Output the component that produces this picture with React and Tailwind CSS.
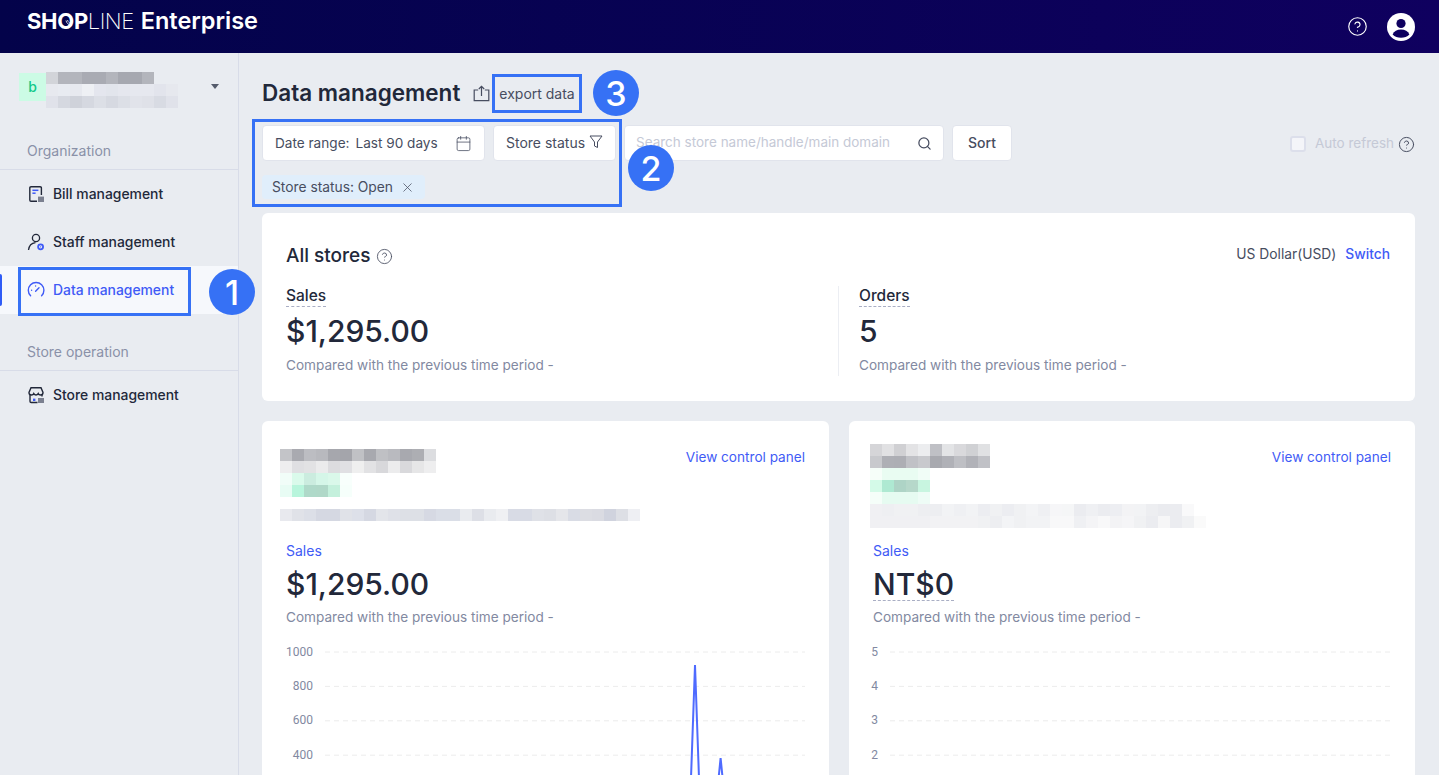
import React from 'react';
import { Calendar, CircleHelp, Search, X } from 'lucide-react';

const inter = 'font-["Inter","Noto_Sans",sans-serif]';

// blurred-out store names, one row of cells per line
const accountPixels = [
  ['#d2d4d9', '#b3b5bc', '#b3b5bc', '#a9abb3', '#a9abb3', '#b3b5bc', '#a6a8b0', '#a6a8b0', '#b3b5bc'],
  ['#e7e9ef', '#e8ebf1', '#e7e9ef', '#eef0f4', '#e4e6ee', '#e2e5ec', '#e5e7ee', '#e6e8ef', '#e6e8ef', '#e2e4ec', '#e6e8ee'],
  ['#e0e2ea', '#d5d8e0', '#cfd2da', '#d5d8e0', '#dcdfe6', '#d6d9e1', '#dcdfe6', '#e1e3ea', '#dfe1e8', '#d8dbe3', '#e0e2ea'],
];

const storeOnePixels = [
  ['#c3c4c8', '#a9aab0', '#bcbdc2', '#b8b9be', '#a6a7ad', '#a4a5ab', '#c0c1c5', '#a8a9af', '#bfc0c4', '#b9babf', '#a8a9af', '#adaeb3', '#dcdde0'],
  ['#eeeeef', '#dfdfe2', '#e2e2e4', '#ebebec', '#dcdcdf', '#e0e0e3', '#efefef', '#e2e2e4', '#d8d8db', '#ececed', '#d9d9dc', '#e6e6e7', '#eeeeef'],
  ['#f1fdf8', '#dafaeb', '#cbecdf', '#d5f6e8', '#daf8ea', '#f8fffc'],
  ['#e8fcf4', '#b8f5dc', '#afd9c9', '#b0d8c8', '#c4f0dc', '#f6fffb'],
  [],
  ['#e8e9ee', '#e0e2e8', '#dcdfe7', '#d5d8e2', '#d5d8e2', '#e0e2e8', '#dde0e9', '#d5d8e2', '#e3e5ea', '#dfe1e8', '#dde0e6', '#dde0e6', '#d6d9e3', '#dadee7', '#dadee7', '#e9ebef', '#dddfe6', '#e9ebef', '#eff0f3', '#d8dbe5', '#d8dbe5', '#dfe1e7', '#dddfe5', '#e5e6ea', '#d9dce5', '#dcdde3', '#dadbe2', '#d0d3de', '#dddfe5', '#eeeff3'],
];

const storeTwoPixels = [
  ['#d5d5d8', '#e1e1e3', '#d0d0d3', '#e3e3e5', '#ecedef', '#bfc0c5', '#e3e4e6', '#d9d9dc', '#d0d1d4', '#e0e1e3'],
  ['#c8c9cd', '#aeafb5', '#adaeb4', '#c0c1c6', '#c8c9cd', '#a8a9af', '#b0b1b7', '#bebfc4', '#b1b2b8', '#c0c1c6'],
  ['#f6fef9', '#e9fcf2', '#e9fcf2', '#e9fcf2', '#f1fdf7'],
  ['#d4fae8', '#aee9d2', '#aed4c6', '#b6d8ca', '#c8f5e0'],
  ['#f5fef9', '#e6fbf1', '#e6fbf1', '#e6fbf1', '#eefcf6'],
  ['#f0f0f3', '#eeeff2', '#f0f1f3', '#f0f1f3', '#edeef1', '#edeef1', '#f2f3f5', '#eff0f3', '#f2f3f5', '#ecedf1', '#f0f1f3', '#ecedf1', '#f0f1f3', '#f3f4f6', '#eff0f3', '#f6f6f8', '#f5f6f7', '#ebecf0', '#eff0f3', '#ebecf0', '#edeef2', '#f3f3f5', '#f2f3f5', '#edeef1', '#eaebef', '#ebecf0', '#f9f9fa'],
  ['#f0f0f3', '#f0f0f3', '#f0f0f3', '#f0f0f3', '#f0f0f3', '#f2f2f4', '#f2f2f4', '#f2f2f4', '#f2f2f4', '#f0f1f3', '#edeef1', '#f3f4f6', '#f0f1f3', '#f2f3f5', '#f2f3f5', '#f8f8f9', '#f8f8f9', '#eff0f3', '#f4f4f6', '#f8f8f9', '#f3f3f5', '#f5f5f7', '#f0f1f3', '#ebecf0', '#f6f6f7', '#ebecf0', '#f0f1f3', '#fafafa'],
];

function Pixels({ rows }) {
  return (
    <div className="flex flex-col">
      {rows.map((row, i) => (
        <div key={i} className="flex h-3">
          {row.map((color, j) => (
            <div key={j} className="h-3 w-3" style={{ backgroundColor: color }} />
          ))}
        </div>
      ))}
    </div>
  );
}

function BillIcon() {
  return (
    <svg width="18" height="18" viewBox="0 0 18 18" fill="none" stroke="#22283a" strokeWidth="1.4">
      <path d="M10 16.3H4A1.2 1.2 0 0 1 2.8 15.1V2.9A1.2 1.2 0 0 1 4 1.7H13.2A1.2 1.2 0 0 1 14.4 2.9V10" />
      <path d="M5.4 5.3H11.4" stroke="#3f5bf6" strokeWidth="1.5" />
      <path d="M5.4 8.2H8.6" stroke="#3f5bf6" strokeWidth="1.5" />
      <rect x="11" y="11.6" width="6" height="5.4" fill="#7b8090" stroke="none" />
    </svg>
  );
}

function StaffIcon() {
  return (
    <svg width="18" height="18" viewBox="0 0 18 18" fill="none" stroke="#22283a" strokeWidth="1.3">
      <circle cx="9" cy="5" r="3.6" />
      <path d="M1.5 17C2 12.8 4.5 10 8.5 9.6" />
      <circle cx="13.6" cy="13.8" r="2.5" stroke="#3f5bf6" strokeWidth="1.8" />
      <circle cx="13.6" cy="13.8" r="0.6" fill="#3f5bf6" stroke="none" />
    </svg>
  );
}

function GaugeIcon() {
  return (
    <svg width="18" height="18" viewBox="0 0 18 18" fill="none" stroke="#3f5bf6" strokeWidth="1.4" strokeLinecap="round">
      <path d="M3.6 14.8A7.8 7.8 0 1 1 14.6 14.8" />
      <path d="M8.6 10.2L12 6.8" />
      <path d="M4.6 9.2V9.3M8.6 4.9V5" />
    </svg>
  );
}

function StoreIcon() {
  return (
    <svg width="18" height="18" viewBox="0 0 18 18" fill="none" stroke="#22283a" strokeWidth="1.4">
      <path d="M4 1.8H14L16 6.5C16 8 15 9 13.6 9C12.5 9 11.5 8.4 11.2 7.6C10.7 8.4 9.8 9 9 9C8.2 9 7.3 8.4 6.8 7.6C6.5 8.4 5.5 9 4.4 9C3 9 2 8 2 6.5Z" />
      <path d="M3 9V15.3A1.2 1.2 0 0 0 4.2 16.5H10.5" />
      <path d="M15 9V10.5" />
      <path d="M6 12.6H8.4V15H6Z" fill="#3f5bf6" stroke="none" />
      <rect x="11" y="12" width="6" height="5" fill="#7b8090" stroke="none" />
    </svg>
  );
}

function UserIcon() {
  return (
    <svg width="28" height="28" viewBox="0 0 28 28">
      <circle cx="14" cy="14" r="14" fill="#fff" />
      <circle cx="14" cy="10.5" r="4.6" fill="#0e005f" />
      <path d="M5.6 21.5C7 18 10 16.6 14 16.6C18 16.6 21 18 22.4 21.5C20.3 23.6 17.3 24.8 14 24.8C10.7 24.8 7.7 23.6 5.6 21.5Z" fill="#0e005f" />
    </svg>
  );
}

function ExportIcon() {
  return (
    <svg width="17" height="17" viewBox="0 0 17 17" fill="none" stroke="#474d60" strokeWidth="1.2" className="ml-[13px] shrink-0">
      <path d="M5.2 5H1.2V15.6H15.8V5H11.8" />
      <path d="M8.5 11V1.4M5.8 4L8.5 1.3L11.2 4" />
    </svg>
  );
}

function SideItem({ icon, label, active }) {
  return (
    <div className={`relative flex h-12 items-center gap-[8px] pl-[27px] text-[13.9px] font-medium ${active ? 'bg-[#f6f8fc] text-[#3f5bf6]' : 'text-[#22283a]'}`}>
      {active && <div className="absolute left-0 top-2 h-8 w-[2px] rounded-r bg-[#2f5cf6]" />}
      {icon}
      <span>{label}</span>
    </div>
  );
}

function Sidebar() {
  return (
    <aside className="w-[239px] shrink-0 border-r border-[#d8dce8]">
      <div className="flex h-[80px] pl-[19px] pr-[19px] pt-[19px]">
        <div className="mt-[1px] flex h-[28px] w-[27px] shrink-0 items-center justify-center self-start bg-[#ccfbe5] text-sm font-medium text-[#12c98a]">b</div>
        <Pixels rows={accountPixels} />
        <div className="ml-auto mt-[12px] h-0 w-0 border-x-[4px] border-t-[5px] border-x-transparent border-t-[#555b6c]" />
      </div>
      <div className="flex h-[37px] items-end border-b border-[#d8dce8] pb-[8px] pl-[27px] text-sm text-[#8a91a8]">Organization</div>
      <SideItem icon={<BillIcon />} label="Bill management" />
      <SideItem icon={<StaffIcon />} label="Staff management" />
      <SideItem icon={<GaugeIcon />} label="Data management" active />
      <div className="flex h-[57px] items-end border-b border-[#d8dce8] pb-[8px] pl-[27px] text-sm text-[#8a91a8]">Store operation</div>
      <SideItem icon={<StoreIcon />} label="Store management" />
    </aside>
  );
}

function Filters() {
  return (
    <div className="flex h-[92px] items-start pt-[4px]">
      <div className="flex flex-col">
        <div className="flex gap-2">
          <div className="flex h-9 w-[223px] items-center justify-between rounded border border-[#e1e4ec] bg-white pl-3 pr-3 text-[13.6px] text-[#474d60]">
            <span className="flex translate-y-[1px] gap-[6px]">
              <span>Date range:</span>
              <span>Last 90 days</span>
            </span>
            <Calendar size={17} strokeWidth={1.1} />
          </div>
          <div className="flex h-9 w-[123px] items-center justify-between rounded border border-[#e1e4ec] bg-white pl-3 pr-3 text-sm text-[#474d60]">
            <span>Store status</span>
            <svg width="14" height="14" viewBox="0 0 14 14" fill="none" stroke="#474d60" strokeWidth="1" className="-translate-y-[1px]">
              <path d="M1 1H13L8.5 7V12.5L5.5 11V7Z" />
            </svg>
          </div>
        </div>
        <div className="mt-[14px] flex h-6 w-[163px] items-center gap-[7px] rounded bg-[#e0eefb] pl-[10px] text-[13.8px] text-[#474d60]">
          <span className="translate-y-[1px]">Store status: Open</span>
          <X size={15} strokeWidth={1.2} />
        </div>
      </div>
      <div className="ml-2 flex h-9 w-[320px] items-center justify-between rounded border border-[#e1e4ec] bg-white pl-[11px] pr-[11px] text-[13.5px] text-[#c5c9d6]">
        <span>Search store name/handle/main domain</span>
        <Search size={15} strokeWidth={2} className="text-[#474d60]" />
      </div>
      <div className="ml-2 flex h-9 w-[60px] items-center justify-center rounded border border-[#e1e4ec] bg-white text-sm font-medium text-[#474d60]">Sort</div>
      <div className="ml-auto flex h-9 translate-y-[1px] items-center text-[13.5px] text-[#c5c9d6]">
        <div className="mr-[9px] h-4 w-4 rounded-[3px] border-2 border-[#dcdfeb] bg-[#f4f5f9]" />
        <span>Auto refresh</span>
        <CircleHelp size={17} strokeWidth={1.4} className="ml-[4px] text-[#474d60]" />
      </div>
    </div>
  );
}

function AllStores() {
  return (
    <section className="h-[188px] rounded-md bg-white pl-6 pr-[25px] pt-[30px]">
      <div className="flex items-center justify-between">
        <div className="flex items-center gap-[6px]">
          <h2 className="text-[19px] font-medium leading-[26px] text-[#22283a]">All stores</h2>
          <CircleHelp size={17} strokeWidth={1.2} className="text-[#474d60]" />
        </div>
        <div className="flex -translate-y-[1px] gap-[9px] text-[13.8px]">
          <span className="text-[#474d60]">US Dollar(USD)</span>
          <span className="font-medium text-[#3f5bf6]">Switch</span>
        </div>
      </div>
      <div className="mt-[17px] flex">
        <div className="h-[90px] w-[553px] border-r border-[#eceef3]">
          <span className="inline-block border-b border-dashed border-[#a9aec4] text-[15.5px] font-medium leading-[20px] text-[#22283a]">Sales</span>
          <div className="mt-[4px] text-[30px] font-medium leading-[40px] text-[#22283a]">$1,295.00</div>
          <div className="mt-[5px] text-[13.6px] text-[#8289a1]">Compared with the previous time period -</div>
        </div>
        <div className="pl-5">
          <span className="inline-block border-b border-dashed border-[#a9aec4] text-[15.5px] font-medium leading-[20px] text-[#22283a]">Orders</span>
          <div className="mt-[4px] text-[30px] font-medium leading-[40px] text-[#22283a]">5</div>
          <div className="mt-[5px] text-[13.6px] text-[#8289a1]">Compared with the previous time period -</div>
        </div>
      </div>
    </section>
  );
}

function Chart({ ticks, x0, width, spikes }) {
  return (
    <svg width={width} height="131" viewBox={`0 0 ${width} 131`} className="-ml-[24px] block">
      {ticks.map((t, i) => {
        const y = 8 + i * 34.4;
        return (
          <g key={t}>
            <text x={x0 - 12} y={y + 3.5} textAnchor="end" fontSize="12" fill="#8289a1" fontFamily="Roboto, sans-serif">{t}</text>
            <line x1={x0} x2={width} y1={y} y2={y} stroke="#ececec" strokeDasharray="5 4" />
          </g>
        );
      })}
      {spikes && (
        <g fill="none" stroke="#4f6bff" strokeWidth="2">
          <path d="M429,134 L433,21 L437,134" />
          <path d="M456.6,134 L458.6,114 L460.6,134" />
        </g>
      )}
    </svg>
  );
}

function StoreCard({ pixels, pixelsLeft, pixelsTop, gap, amount, dashed, ticks, spikes, x0, chartWidth }) {
  return (
    <section className="h-[400px] flex-1 rounded-md bg-white pr-6">
      <div className={`flex items-start justify-between pt-[23px] ${pixelsLeft}`}>
        <div className={pixelsTop}>
          <Pixels rows={pixels} />
        </div>
        <span className="mt-[3px] text-[13.6px] leading-[20px] text-[#3f5bf6]">View control panel</span>
      </div>
      <div className={`pl-6 ${gap}`}>
        <div className="text-sm leading-[20px] text-[#3f5bf6]">Sales</div>
        <div className="mt-[7px] flex">
          <span className={`border-b border-dashed text-[30px] font-medium leading-[32px] text-[#22283a] ${dashed ? 'border-[#a9aec4]' : 'border-transparent'}`}>{amount}</span>
        </div>
        <div className="mt-[6px] text-[13.6px] leading-[20px] text-[#8289a1]">Compared with the previous time period -</div>
        <div className="mt-[17px]">
          <Chart ticks={ticks} x0={x0} width={chartWidth} spikes={spikes} />
        </div>
      </div>
    </section>
  );
}

export default function App() {
  return (
    <div className={`relative flex h-[775px] flex-col overflow-hidden bg-[#e9ecf1] ${inter}`}>
      <header className="flex h-[53px] shrink-0 items-center justify-between bg-gradient-to-r from-[#03034a] to-[#0f005f] pl-[27px] pr-[24px] text-white">
        <div className="flex -translate-y-[6px] items-baseline leading-none">
          <span className="relative text-[22px] font-bold tracking-[-0.3px]">
            SHOP
            <svg width="8" height="8" viewBox="0 0 8 8" fill="none" stroke="#fff" strokeWidth="0.8" className="absolute left-[38px] top-[9px]">
              <path d="M1 1.5C1.5 4 3.5 6 6.5 6.5" />
              <path d="M2.5 1C3 3 4.5 4.5 7 5" />
            </svg>
          </span>
          <span className="text-[22px] font-extralight tracking-[-0.5px]">LINE</span>
          <span className="ml-[7px] text-[23.5px] font-semibold">Enterprise</span>
        </div>
        <div className="flex items-center gap-[19px]">
          <CircleHelp size={21} strokeWidth={1.3} />
          <UserIcon />
        </div>
      </header>
      <div className="flex min-h-0 flex-1">
        <Sidebar />
        <main className="min-w-0 flex-1 pl-[23px] pr-[24px] text-sm">
          <div className="flex h-[68px] items-center pt-[13px]">
            <h1 className="text-[22.5px] font-semibold text-[#22283a]">Data management</h1>
            <ExportIcon />
            <span className="ml-[9px] text-[#474d60]">export data</span>
          </div>
          <Filters />
          <AllStores />
          <div className="mt-5 flex gap-5">
            <StoreCard pixels={storeOnePixels} pixelsLeft="pl-[18px]" pixelsTop="mt-[5px]" gap="mt-[20px]" amount="$1,295.00" ticks={['1000', '800', '600', '400']} x0={63} chartWidth={543} spikes />
            <StoreCard pixels={storeTwoPixels} pixelsLeft="pl-[21px]" pixelsTop="mt-0" gap="mt-[13px]" amount="NT$0" dashed ticks={['5', '4', '3', '2']} x0={41} chartWidth={542} />
          </div>
        </main>
      </div>

      {/* annotation overlays */}
      <div className="absolute left-[18px] top-[267px] h-[49px] w-[173px] border-[3px] border-[#3671f5]" />
      <div className="absolute left-[252px] top-[119px] h-[88px] w-[370px] border-[3px] border-[#3671f5]" />
      <div className="absolute left-[492px] top-[74px] h-[39px] w-[90px] border-[3px] border-[#3671f5]" />
      <div className="absolute left-[209px] top-[269px] flex h-[46px] w-[46px] items-center justify-center rounded-full bg-[#3671f5] text-[34px] font-medium text-white">1</div>
      <div className="absolute left-[628px] top-[145px] flex h-[46px] w-[46px] items-center justify-center rounded-full bg-[#3671f5] text-[34px] font-medium text-white">2</div>
      <div className="absolute left-[593px] top-[70px] flex h-[46px] w-[46px] items-center justify-center rounded-full bg-[#3671f5] text-[34px] font-medium text-white">3</div>
    </div>
  );
}
